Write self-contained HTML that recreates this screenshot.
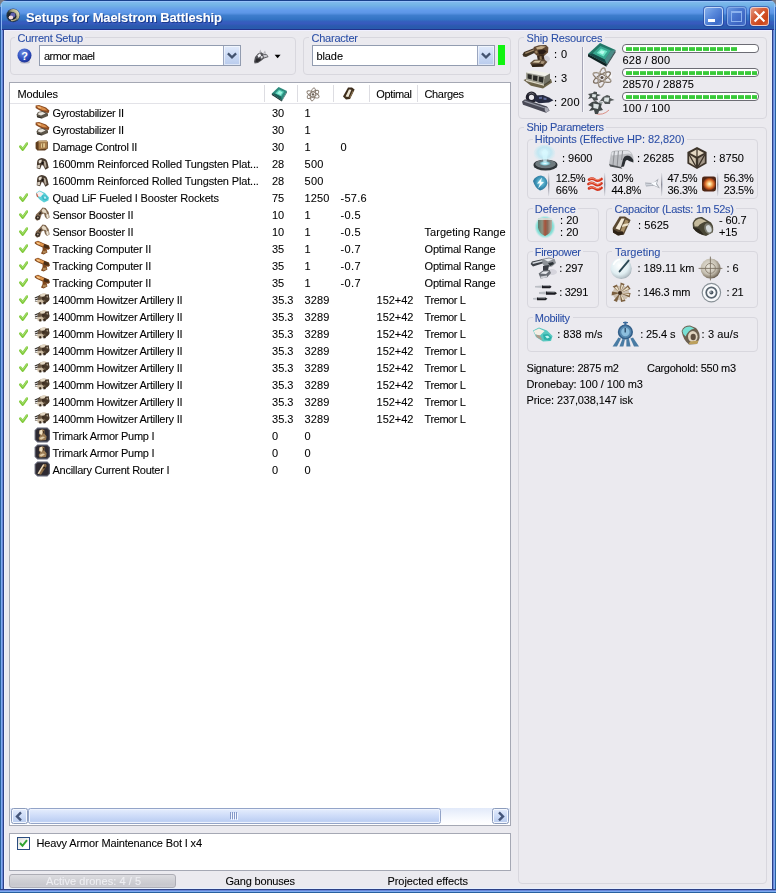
<!DOCTYPE html><html><head><meta charset="utf-8"><title>Setups for Maelstrom Battleship</title><style>

html,body{margin:0;padding:0}
body{width:776px;height:893px;overflow:hidden;position:relative;background:#EBEAEF;font:11px "Liberation Sans",sans-serif;color:#000}
div,span,svg{position:absolute;box-sizing:content-box}
.t{white-space:pre;line-height:13px;height:13px;-webkit-text-stroke:0.08px currentColor}
#tx{left:0;top:0;width:776px;height:893px;will-change:transform}
.ttl{line-height:16px;height:16px;text-shadow:1px 1px 0 #1A3A8C}
.grp{border:1px solid #D8D7DE;border-radius:4px}
.wb{background:#fff;border:1px solid #A5A8B4}
.lblbg{background:#EBEAEF}
.sep{width:1px;background:#E2E1E6}

</style></head><body>
<svg width="0" height="0" style="left:0;top:0"><defs><filter id="bl" x="-10%" y="-10%" width="120%" height="120%"><feGaussianBlur stdDeviation="0.35"/></filter></defs></svg>
<div style="left:0;top:0;width:776px;height:30px;border-radius:7px 7px 0 0;background:linear-gradient(to bottom,#19418C 0,#19418C 1px,#96C3FA 1px,#96C3FA 2px,#7DB9EB 2.5px,#73B4E6 5px,#69A5E8 8px,#629BEB 10.5px,#5C96E6 13px,#3E7DCD 15.5px,#3273C3 19.5px,#3560BE 21.5px,#375ABE 23.5px,#2B5AAE 26px,#285AAC 29px,#23328C 29px,#23328C 30px)"></div>
<div style="left:0;top:0;width:776px;height:30px;z-index:-1;background:#7A7A84"></div>
<div style="left:0;top:30px;width:4px;height:863px;background:linear-gradient(to right,#28609F 0,#28609F 1px,#7DAAF0 1px,#7DAAF0 2px,#6987D7 2px,#6987D7 3px,#2D4187 3px)"></div>
<div style="left:772px;top:30px;width:4px;height:863px;background:linear-gradient(to right,#2D4187 0,#2D4187 1px,#6987D7 1px,#6987D7 2px,#7DAAF0 2px,#7DAAF0 3px,#28609F 3px)"></div>
<div style="left:0;top:889px;width:776px;height:4px;background:linear-gradient(to bottom,#2D4187 0,#2D4187 1px,#6987D7 1px,#6987D7 2px,#7DAAF0 2px,#7DAAF0 3px,#28609F 3px)"></div>
<div style="left:4px;top:30px;width:768px;height:1px;background:#F0F0FF"></div>
<div style="left:4px;top:30px;width:1px;height:859px;background:#EEF1FF"></div>
<div style="left:771px;top:30px;width:1px;height:859px;background:#E6F0FF"></div>
<div style="left:4px;top:888px;width:768px;height:1px;background:#E6F0FF"></div>
<div style="left:0;top:7px;width:1px;height:23px;background:rgba(30,80,165,.7)"></div><div style="left:1px;top:4px;width:1px;height:26px;background:rgba(160,200,252,.8)"></div>
<div style="left:775px;top:7px;width:1px;height:23px;background:rgba(30,80,165,.7)"></div><div style="left:774px;top:4px;width:1px;height:26px;background:rgba(160,200,252,.8)"></div>
<svg style="left:6px;top:8px" width="15" height="15" viewBox="0 0 15 15" ><defs><linearGradient id="ai" x1="0" y1=".85" x2="1" y2=".15"><stop offset="0" stop-color="#1A2632"/><stop offset=".36" stop-color="#28343A"/><stop offset=".6" stop-color="#A8A47C"/><stop offset="1" stop-color="#F0ECCC"/></linearGradient></defs>
<g filter="url(#bl)"><circle cx="7.1" cy="7.4" r="6.8" fill="#22324A" opacity=".8"/><circle cx="7.2" cy="7.2" r="6.2" fill="url(#ai)"/>
<circle cx="6.2" cy="8.2" r="4.2" fill="#1C2430"/><circle cx="6.9" cy="6.9" r="2.5" fill="#6060AE"/><ellipse cx="4.9" cy="9.5" rx="2.3" ry="2" fill="#F8DEDE"/><path d="M5 12.4 Q8 13 10 11" stroke="#B4AC84" stroke-width="1.2" fill="none"/></g></svg><div style="left:704px;top:7px;width:17px;height:17px;border:1px solid #C4D8F6;border-radius:3px;box-shadow:0 0 0 1px rgba(30,60,150,.55);background:linear-gradient(135deg,#86B0EC,#5A8ADC 40%,#3E6CC8 78%,#5482D6)"></div><div style="left:708px;top:19px;width:7px;height:3px;background:#fff"></div><div style="left:727px;top:7px;width:17px;height:17px;border:1px solid #86AAE6;border-radius:3px;box-shadow:0 0 0 1px rgba(30,60,150,.45);background:linear-gradient(135deg,#6C9AE0,#4A78D0 40%,#3C64C2 78%,#4872CA)"></div><div style="left:731px;top:11px;width:9px;height:8px;border:1px solid #8CB2EE;border-top-width:2px"></div><div style="left:750px;top:7px;width:17px;height:17px;border:1px solid #F0CCC4;border-radius:3px;box-shadow:0 0 0 1px rgba(30,60,150,.55);background:linear-gradient(135deg,#E49A84,#D65E38 38%,#CC4418 75%,#D8643C)"></div><svg style="left:750px;top:7px" width="19" height="19" viewBox="0 0 19 19" ><path d="M4.6 4.6 L14.4 14.4 M14.4 4.6 L4.6 14.4" stroke="#fff" stroke-width="2.1" stroke-linecap="butt"/></svg>
<div class="grp" style="left:10px;top:37px;width:284px;height:36px"></div>
<div class="lblbg" style="left:15px;top:34px;width:70px;height:10px;"></div>
<div class="grp" style="left:303px;top:37px;width:206px;height:36px"></div>
<div class="lblbg" style="left:309px;top:34px;width:51px;height:10px;"></div>
<div style="left:39px;top:45px;width:200px;height:19px;background:#fff;border:1px solid #929CB0"></div>
<div style="left:223px;top:46px;width:16px;height:19px;border-left:1px solid #9AA6C0;background:linear-gradient(to bottom,#E2EBFB,#CBDAF5 50%,#B9CBEC);box-shadow:inset 0 0 0 1px rgba(255,255,255,.5)"></div><svg style="left:224px;top:46px" width="16" height="18" viewBox="0 0 16 18" ><path d="M3.9 7.4 L8 11.4 L12.1 7.4" stroke="#43536F" stroke-width="2.2" fill="none"/></svg>
<div style="left:312px;top:45px;width:181px;height:19px;background:#fff;border:1px solid #929CB0"></div>
<div style="left:477px;top:46px;width:16px;height:19px;border-left:1px solid #9AA6C0;background:linear-gradient(to bottom,#E2EBFB,#CBDAF5 50%,#B9CBEC);box-shadow:inset 0 0 0 1px rgba(255,255,255,.5)"></div><svg style="left:478px;top:46px" width="16" height="18" viewBox="0 0 16 18" ><path d="M3.9 7.4 L8 11.4 L12.1 7.4" stroke="#43536F" stroke-width="2.2" fill="none"/></svg>
<div style="left:498px;top:45px;width:7px;height:20px;background:#10F410"></div>
<svg style="left:17px;top:48px" width="16" height="16" viewBox="0 0 16 16" ><defs><radialGradient id="hg" cx="0.4" cy="0.3" r="0.75"><stop offset="0" stop-color="#6E8CE0"/><stop offset="0.6" stop-color="#3050C0"/><stop offset="1" stop-color="#1A2E90"/></radialGradient></defs>
<ellipse cx="8" cy="14" rx="5" ry="1.6" fill="#9A9AB0" opacity=".6"/>
<circle cx="7.5" cy="7.5" r="7" fill="url(#hg)"/>
<text x="7.6" y="11.6" font-family="Liberation Sans,sans-serif" font-weight="bold" font-size="11" fill="#fff" text-anchor="middle">?</text></svg>
<svg style="left:253px;top:48px" width="17" height="17" viewBox="0 0 17 17" ><g filter="url(#bl)"><path d="M1 13.6 L2 9 L5 5.6 L8 4 L10 5.6 L14 6.4 L15.6 9 L11 10.6 L8.6 12.6 L5 15 L1.6 15.4 Z" fill="#55555A"/>
<path d="M6 4.4 L7.4 1.4 L8.6 4.6 Z M10.4 5 L12 2.6 L13.2 6 Z" fill="#B4B4BA"/>
<path d="M4.4 7.4 L7 5.2 L8.2 7.6 L5.6 9.8 Z" fill="#F2F2F6"/><path d="M10 6.4 L14 7.2 L14.6 8.6 L11 9.6 Z" fill="#C8C8CE"/>
<path d="M3 10.6 L6.6 10.6 L8 12 L4.6 14 L2.4 14 Z" fill="#2A2A2E"/><path d="M7.6 8 L9.6 8 L9.6 10 L8 10.4 Z" fill="#DADADF"/></g></svg>
<svg style="left:274px;top:54px" width="8" height="6"><path d="M0.6 0.8h6l-3 3.5z" fill="#000"/></svg>
<div style="left:9px;top:82px;width:500px;height:742px;background:#fff;border:1px solid #A5A8B4"></div>
<div style="left:10px;top:103px;width:500px;height:1px;background:#E3E3E8"></div>
<div style="left:264px;top:85px;width:1px;height:17px;background:#DDDDE2"></div>
<div style="left:297px;top:85px;width:1px;height:17px;background:#DDDDE2"></div>
<div style="left:333px;top:85px;width:1px;height:17px;background:#DDDDE2"></div>
<div style="left:369px;top:85px;width:1px;height:17px;background:#DDDDE2"></div>
<div style="left:417px;top:85px;width:1px;height:17px;background:#DDDDE2"></div>
<svg style="left:271px;top:86px" width="17" height="16" viewBox="0 0 17 16" ><g filter="url(#bl)"><path d="M0.8 7.6 L7.6 1 L16 5 L11 14.4 Z" fill="#2E8C7E"/><path d="M4 7.4 L8 3.4 L13 5.8 L10 10.6 Z" fill="#58D0B8"/><path d="M6 7.2 L8.4 4.8 L11.4 6.2 L9.6 9 Z" fill="#A0F4E0"/>
<path d="M0.8 7.6 L11 14.4 L10.8 15.6 L0.8 9 Z" fill="#1A3030"/><path d="M11 14.4 L16 5 L16 6.4 L10.8 15.6 Z" fill="#3A5C60"/><path d="M0.8 7.6 L4 7.4 L10 10.6 L11 14.4 Z" fill="#1E5E58"/></g></svg><svg style="left:305px;top:86px" width="16" height="16" viewBox="0 0 16 16" ><g filter="url(#bl)"><g fill="none" stroke="#84786C" stroke-width=".9"><ellipse cx="8" cy="8.4" rx="6.6" ry="2.4" transform="rotate(24 8 8.4)"/><ellipse cx="8" cy="8.4" rx="6.6" ry="2.4" transform="rotate(-32 8 8.4)"/><ellipse cx="8" cy="8.4" rx="2.4" ry="6.6" transform="rotate(10 8 8.4)"/></g><circle cx="8" cy="8.4" r="1.2" fill="#6A5E52"/></g></svg><svg style="left:341px;top:86px" width="16" height="16" viewBox="0 0 16 16" ><g filter="url(#bl)"><path d="M2 10.6 L7 1.6 L11 1.4 L13.6 3.6 L9 13 L5 13.6 Z" fill="#3E2E1E"/><path d="M4.6 10.4 L8 3.6 L10.4 3.8 L7.4 11 Z" fill="#EEE6D4"/><path d="M8.4 11.4 L11.8 4.4 L12.8 5 L9 12.6 Z" fill="#8E7654"/></g></svg>
<svg style="left:34px;top:104px" width="17" height="16" viewBox="0 0 17 16" ><g filter="url(#bl)"><path d="M1.6 1.6 L5 1 L12 3.6 L15.4 6.6 L14.6 9 L10 8.4 L4 5.6 L1.6 4 Z" fill="#8A4A20"/><path d="M2.4 2 L5 1.8 L11 4.2 L13.6 6.4 L9 6.2 L4 4 Z" fill="#D88C48"/><path d="M4 2.6 L7 3.4 L6.6 4.4 L3.8 3.6 Z" fill="#F4C890"/>
<path d="M4 8 L9 7 L14 9.6 L14 12 L8 14.6 L3 13 L2.6 10.6 Z" fill="#5C5448"/><path d="M4.6 8.6 L8.6 8 L11.6 9.6 L7 11.6 L4 10.6 Z" fill="#E8E4DC"/><path d="M3 12 L7.6 13.4 L7.6 14.6 L3 13.2 Z" fill="#2E2A24"/></g></svg>
<svg style="left:34px;top:121px" width="17" height="16" viewBox="0 0 17 16" ><g filter="url(#bl)"><path d="M1.6 1.6 L5 1 L12 3.6 L15.4 6.6 L14.6 9 L10 8.4 L4 5.6 L1.6 4 Z" fill="#8A4A20"/><path d="M2.4 2 L5 1.8 L11 4.2 L13.6 6.4 L9 6.2 L4 4 Z" fill="#D88C48"/><path d="M4 2.6 L7 3.4 L6.6 4.4 L3.8 3.6 Z" fill="#F4C890"/>
<path d="M4 8 L9 7 L14 9.6 L14 12 L8 14.6 L3 13 L2.6 10.6 Z" fill="#5C5448"/><path d="M4.6 8.6 L8.6 8 L11.6 9.6 L7 11.6 L4 10.6 Z" fill="#E8E4DC"/><path d="M3 12 L7.6 13.4 L7.6 14.6 L3 13.2 Z" fill="#2E2A24"/></g></svg>
<svg style="left:19px;top:142px" width="10" height="10" viewBox="0 0 10 10" ><g filter="url(#bl)"><path d="M1.4 4.6 L3.8 7.6 L8 1.6" stroke="#80CA3A" stroke-width="2.6" fill="none" stroke-linecap="round" stroke-linejoin="round"/><path d="M1.6 4.2 L3.8 6.6 L7.8 1.4" stroke="#B4E486" stroke-width=".8" fill="none" stroke-linecap="round"/></g></svg>
<svg style="left:34px;top:138px" width="17" height="16" viewBox="0 0 17 16" ><g filter="url(#bl)"><path d="M1.6 4.4 L4.4 2.8 L12.6 2.6 L13.8 4 L13.8 10.6 L11 12.6 L3.4 12.6 L1.6 10.6 Z" fill="#5E3E1E"/><path d="M4.6 4.4 L13 4 L13 10.4 L4.6 11.4 Z" fill="#A87C48"/><path d="M7 5.4 L11 5.2 L11 9.4 L7 9.8 Z" fill="#E0C48C"/><path d="M8.6 5.4 V9.6" stroke="#7C5A30" stroke-width=".8"/><path d="M4.4 2.8 L12.6 2.6 L13.8 4 L4.6 4.4 Z" fill="#C8A878"/></g></svg>
<svg style="left:34px;top:155px" width="17" height="16" viewBox="0 0 17 16" ><g filter="url(#bl)"><g transform="translate(0.9,1.6) scale(0.92,0.9)"><path d="M2.4 6 Q3 2 7.4 1.6 Q12.6 2 13.6 6.4 L15 12.4 L11.4 14.6 L9 10 L7.4 9.4 L5.6 14 L2 13 Z" fill="#4A3C30"/><path d="M4 5 Q5.4 3 7.6 3.6 L7 6.6 L4.4 7.6 Z" fill="#E8E0D4"/><path d="M9.6 4.6 Q11.6 4.6 12 7 L12.6 11.6 L11 12.6 L9.8 8 Z" fill="#B4A898"/><path d="M2.6 9.6 L5.6 9 L5.4 13 L2.6 12.4 Z" fill="#D8CEC0"/><path d="M7.4 5.6 L9.6 6 L9 8.6 L7 8 Z" fill="#1E1814"/></g></g></svg>
<svg style="left:34px;top:172px" width="17" height="16" viewBox="0 0 17 16" ><g filter="url(#bl)"><g transform="translate(0.9,1.6) scale(0.92,0.9)"><path d="M2.4 6 Q3 2 7.4 1.6 Q12.6 2 13.6 6.4 L15 12.4 L11.4 14.6 L9 10 L7.4 9.4 L5.6 14 L2 13 Z" fill="#4A3C30"/><path d="M4 5 Q5.4 3 7.6 3.6 L7 6.6 L4.4 7.6 Z" fill="#E8E0D4"/><path d="M9.6 4.6 Q11.6 4.6 12 7 L12.6 11.6 L11 12.6 L9.8 8 Z" fill="#B4A898"/><path d="M2.6 9.6 L5.6 9 L5.4 13 L2.6 12.4 Z" fill="#D8CEC0"/><path d="M7.4 5.6 L9.6 6 L9 8.6 L7 8 Z" fill="#1E1814"/></g></g></svg>
<svg style="left:19px;top:193px" width="10" height="10" viewBox="0 0 10 10" ><g filter="url(#bl)"><path d="M1.4 4.6 L3.8 7.6 L8 1.6" stroke="#80CA3A" stroke-width="2.6" fill="none" stroke-linecap="round" stroke-linejoin="round"/><path d="M1.6 4.2 L3.8 6.6 L7.8 1.4" stroke="#B4E486" stroke-width=".8" fill="none" stroke-linecap="round"/></g></svg>
<svg style="left:34px;top:189px" width="17" height="16" viewBox="0 0 17 16" ><g filter="url(#bl)"><path d="M2 4 L5.6 1.6 L11 4 L15 8.6 L14.4 11.6 L10 13.4 L5.6 10.4 L2.6 7 Z" fill="#5CD0D8"/><path d="M2.4 4.2 L5.6 2.2 L9.6 4.4 L6.4 8 L3.4 7 Z" fill="#F6EEF0"/><path d="M2 4 L2.8 7.2 L4.6 8.8 L3.4 5 Z" fill="#D06048"/><path d="M8 6.6 L12 6.4 L14.2 9.4 L12 11.6 L8.6 10.6 Z" fill="#38B8C4"/><path d="M9.4 7.6 L11.6 7.6 L12.6 9.2 L10.6 10 Z" fill="#B8F0F8"/></g></svg>
<svg style="left:19px;top:210px" width="10" height="10" viewBox="0 0 10 10" ><g filter="url(#bl)"><path d="M1.4 4.6 L3.8 7.6 L8 1.6" stroke="#80CA3A" stroke-width="2.6" fill="none" stroke-linecap="round" stroke-linejoin="round"/><path d="M1.6 4.2 L3.8 6.6 L7.8 1.4" stroke="#B4E486" stroke-width=".8" fill="none" stroke-linecap="round"/></g></svg>
<svg style="left:34px;top:206px" width="17" height="16" viewBox="0 0 17 16" ><g filter="url(#bl)"><path d="M0.8 12.6 L2 8.6 L5.6 5 L8.6 1.6 L11.6 2 L14.6 6 L15.6 11.6 L13 13 L11 11 L10 7.6 L7.6 8.6 L6 13.6 L3 14.8 Z" fill="#806850"/><path d="M7.6 4 L9.6 2.6 L12 4.6 L13.4 8.6 L11.4 7 L8.6 6.6 Z" fill="#E4D8C4"/><path d="M12 8.6 L14.4 8 L14.8 11.4 L13 12.4 Z" fill="#F0E8D8"/><circle cx="3.8" cy="11.6" r="2.2" fill="#2A221C"/><circle cx="3.8" cy="11.6" r="1" fill="#B0A08C"/><path d="M4.6 7.6 L7 5.6 L7.6 7.6 L5.6 9 Z" fill="#3A2E24"/></g></svg>
<svg style="left:19px;top:227px" width="10" height="10" viewBox="0 0 10 10" ><g filter="url(#bl)"><path d="M1.4 4.6 L3.8 7.6 L8 1.6" stroke="#80CA3A" stroke-width="2.6" fill="none" stroke-linecap="round" stroke-linejoin="round"/><path d="M1.6 4.2 L3.8 6.6 L7.8 1.4" stroke="#B4E486" stroke-width=".8" fill="none" stroke-linecap="round"/></g></svg>
<svg style="left:34px;top:223px" width="17" height="16" viewBox="0 0 17 16" ><g filter="url(#bl)"><path d="M0.8 12.6 L2 8.6 L5.6 5 L8.6 1.6 L11.6 2 L14.6 6 L15.6 11.6 L13 13 L11 11 L10 7.6 L7.6 8.6 L6 13.6 L3 14.8 Z" fill="#806850"/><path d="M7.6 4 L9.6 2.6 L12 4.6 L13.4 8.6 L11.4 7 L8.6 6.6 Z" fill="#E4D8C4"/><path d="M12 8.6 L14.4 8 L14.8 11.4 L13 12.4 Z" fill="#F0E8D8"/><circle cx="3.8" cy="11.6" r="2.2" fill="#2A221C"/><circle cx="3.8" cy="11.6" r="1" fill="#B0A08C"/><path d="M4.6 7.6 L7 5.6 L7.6 7.6 L5.6 9 Z" fill="#3A2E24"/></g></svg>
<svg style="left:19px;top:244px" width="10" height="10" viewBox="0 0 10 10" ><g filter="url(#bl)"><path d="M1.4 4.6 L3.8 7.6 L8 1.6" stroke="#80CA3A" stroke-width="2.6" fill="none" stroke-linecap="round" stroke-linejoin="round"/><path d="M1.6 4.2 L3.8 6.6 L7.8 1.4" stroke="#B4E486" stroke-width=".8" fill="none" stroke-linecap="round"/></g></svg>
<svg style="left:34px;top:240px" width="17" height="16" viewBox="0 0 17 16" ><g filter="url(#bl)"><path d="M0.8 2 L4 0.8 L10 3.4 L15 5.4 L16 8.6 L14 10 L12.6 9 L13.4 12.6 L9.6 14.6 L7 13.6 L8.6 10 L8.6 7.6 L3 5 L0.8 3.6 Z" fill="#80481E"/><path d="M1.6 2.2 L4 1.6 L10 4.2 L9 6.4 L3.4 4.2 Z" fill="#E0964C"/><path d="M3 2.4 L6 3.4 L5.6 4.4 L2.8 3.4 Z" fill="#F8D098"/><path d="M10 4 L14.6 5.8 L15.2 8.4 L13 8.6 L10 7.4 Z" fill="#4A2E16"/><path d="M8.6 11 L12.4 10.4 L12.6 12.4 L9 13.6 Z" fill="#B08858"/></g></svg>
<svg style="left:19px;top:261px" width="10" height="10" viewBox="0 0 10 10" ><g filter="url(#bl)"><path d="M1.4 4.6 L3.8 7.6 L8 1.6" stroke="#80CA3A" stroke-width="2.6" fill="none" stroke-linecap="round" stroke-linejoin="round"/><path d="M1.6 4.2 L3.8 6.6 L7.8 1.4" stroke="#B4E486" stroke-width=".8" fill="none" stroke-linecap="round"/></g></svg>
<svg style="left:34px;top:257px" width="17" height="16" viewBox="0 0 17 16" ><g filter="url(#bl)"><path d="M0.8 2 L4 0.8 L10 3.4 L15 5.4 L16 8.6 L14 10 L12.6 9 L13.4 12.6 L9.6 14.6 L7 13.6 L8.6 10 L8.6 7.6 L3 5 L0.8 3.6 Z" fill="#80481E"/><path d="M1.6 2.2 L4 1.6 L10 4.2 L9 6.4 L3.4 4.2 Z" fill="#E0964C"/><path d="M3 2.4 L6 3.4 L5.6 4.4 L2.8 3.4 Z" fill="#F8D098"/><path d="M10 4 L14.6 5.8 L15.2 8.4 L13 8.6 L10 7.4 Z" fill="#4A2E16"/><path d="M8.6 11 L12.4 10.4 L12.6 12.4 L9 13.6 Z" fill="#B08858"/></g></svg>
<svg style="left:19px;top:278px" width="10" height="10" viewBox="0 0 10 10" ><g filter="url(#bl)"><path d="M1.4 4.6 L3.8 7.6 L8 1.6" stroke="#80CA3A" stroke-width="2.6" fill="none" stroke-linecap="round" stroke-linejoin="round"/><path d="M1.6 4.2 L3.8 6.6 L7.8 1.4" stroke="#B4E486" stroke-width=".8" fill="none" stroke-linecap="round"/></g></svg>
<svg style="left:34px;top:274px" width="17" height="16" viewBox="0 0 17 16" ><g filter="url(#bl)"><path d="M0.8 2 L4 0.8 L10 3.4 L15 5.4 L16 8.6 L14 10 L12.6 9 L13.4 12.6 L9.6 14.6 L7 13.6 L8.6 10 L8.6 7.6 L3 5 L0.8 3.6 Z" fill="#80481E"/><path d="M1.6 2.2 L4 1.6 L10 4.2 L9 6.4 L3.4 4.2 Z" fill="#E0964C"/><path d="M3 2.4 L6 3.4 L5.6 4.4 L2.8 3.4 Z" fill="#F8D098"/><path d="M10 4 L14.6 5.8 L15.2 8.4 L13 8.6 L10 7.4 Z" fill="#4A2E16"/><path d="M8.6 11 L12.4 10.4 L12.6 12.4 L9 13.6 Z" fill="#B08858"/></g></svg>
<svg style="left:19px;top:295px" width="10" height="10" viewBox="0 0 10 10" ><g filter="url(#bl)"><path d="M1.4 4.6 L3.8 7.6 L8 1.6" stroke="#80CA3A" stroke-width="2.6" fill="none" stroke-linecap="round" stroke-linejoin="round"/><path d="M1.6 4.2 L3.8 6.6 L7.8 1.4" stroke="#B4E486" stroke-width=".8" fill="none" stroke-linecap="round"/></g></svg>
<svg style="left:34px;top:291px" width="17" height="16" viewBox="0 0 17 16" ><g filter="url(#bl)"><path d="M0.6 6.4 L6 4.2 L6.4 5.4 L1 7.6 Z M0.8 8.6 L6 6.6 L6.4 7.8 L1.2 9.6 Z" fill="#34302C"/><path d="M0.8 10.2 L5 9.4 L5 10.4 L1 11 Z" fill="#8C8478"/>
<ellipse cx="9.6" cy="7.6" rx="5.8" ry="4.8" fill="#6A5844"/><path d="M6 3.6 L10.6 2 L13.4 3.6 L9.4 5.8 L6.4 5.4 Z" fill="#E4D8C4"/><path d="M3.4 9.2 L8 8.6 L10 11 L6.4 13.4 L3.6 12.4 Z" fill="#CCBCA4"/>
<path d="M11 3.8 L14.8 3.2 L15.4 9 L12.4 11.4 L10.6 8 Z" fill="#46382A"/><path d="M8 6 L10.6 5.6 L11 8.6 L8.4 9 Z" fill="#3E2E20"/>
<path d="M5 11.6 L7 11 L7.6 13.2 L5.4 13.6 Z M9.2 11 L11.8 10.4 L11.8 13 L9.6 13.6 Z" fill="#36291E"/><path d="M12.4 5 L14 4.8 L14.2 6.4 L12.8 6.6 Z" fill="#A89880"/></g></svg>
<svg style="left:19px;top:312px" width="10" height="10" viewBox="0 0 10 10" ><g filter="url(#bl)"><path d="M1.4 4.6 L3.8 7.6 L8 1.6" stroke="#80CA3A" stroke-width="2.6" fill="none" stroke-linecap="round" stroke-linejoin="round"/><path d="M1.6 4.2 L3.8 6.6 L7.8 1.4" stroke="#B4E486" stroke-width=".8" fill="none" stroke-linecap="round"/></g></svg>
<svg style="left:34px;top:308px" width="17" height="16" viewBox="0 0 17 16" ><g filter="url(#bl)"><path d="M0.6 6.4 L6 4.2 L6.4 5.4 L1 7.6 Z M0.8 8.6 L6 6.6 L6.4 7.8 L1.2 9.6 Z" fill="#34302C"/><path d="M0.8 10.2 L5 9.4 L5 10.4 L1 11 Z" fill="#8C8478"/>
<ellipse cx="9.6" cy="7.6" rx="5.8" ry="4.8" fill="#6A5844"/><path d="M6 3.6 L10.6 2 L13.4 3.6 L9.4 5.8 L6.4 5.4 Z" fill="#E4D8C4"/><path d="M3.4 9.2 L8 8.6 L10 11 L6.4 13.4 L3.6 12.4 Z" fill="#CCBCA4"/>
<path d="M11 3.8 L14.8 3.2 L15.4 9 L12.4 11.4 L10.6 8 Z" fill="#46382A"/><path d="M8 6 L10.6 5.6 L11 8.6 L8.4 9 Z" fill="#3E2E20"/>
<path d="M5 11.6 L7 11 L7.6 13.2 L5.4 13.6 Z M9.2 11 L11.8 10.4 L11.8 13 L9.6 13.6 Z" fill="#36291E"/><path d="M12.4 5 L14 4.8 L14.2 6.4 L12.8 6.6 Z" fill="#A89880"/></g></svg>
<svg style="left:19px;top:329px" width="10" height="10" viewBox="0 0 10 10" ><g filter="url(#bl)"><path d="M1.4 4.6 L3.8 7.6 L8 1.6" stroke="#80CA3A" stroke-width="2.6" fill="none" stroke-linecap="round" stroke-linejoin="round"/><path d="M1.6 4.2 L3.8 6.6 L7.8 1.4" stroke="#B4E486" stroke-width=".8" fill="none" stroke-linecap="round"/></g></svg>
<svg style="left:34px;top:325px" width="17" height="16" viewBox="0 0 17 16" ><g filter="url(#bl)"><path d="M0.6 6.4 L6 4.2 L6.4 5.4 L1 7.6 Z M0.8 8.6 L6 6.6 L6.4 7.8 L1.2 9.6 Z" fill="#34302C"/><path d="M0.8 10.2 L5 9.4 L5 10.4 L1 11 Z" fill="#8C8478"/>
<ellipse cx="9.6" cy="7.6" rx="5.8" ry="4.8" fill="#6A5844"/><path d="M6 3.6 L10.6 2 L13.4 3.6 L9.4 5.8 L6.4 5.4 Z" fill="#E4D8C4"/><path d="M3.4 9.2 L8 8.6 L10 11 L6.4 13.4 L3.6 12.4 Z" fill="#CCBCA4"/>
<path d="M11 3.8 L14.8 3.2 L15.4 9 L12.4 11.4 L10.6 8 Z" fill="#46382A"/><path d="M8 6 L10.6 5.6 L11 8.6 L8.4 9 Z" fill="#3E2E20"/>
<path d="M5 11.6 L7 11 L7.6 13.2 L5.4 13.6 Z M9.2 11 L11.8 10.4 L11.8 13 L9.6 13.6 Z" fill="#36291E"/><path d="M12.4 5 L14 4.8 L14.2 6.4 L12.8 6.6 Z" fill="#A89880"/></g></svg>
<svg style="left:19px;top:346px" width="10" height="10" viewBox="0 0 10 10" ><g filter="url(#bl)"><path d="M1.4 4.6 L3.8 7.6 L8 1.6" stroke="#80CA3A" stroke-width="2.6" fill="none" stroke-linecap="round" stroke-linejoin="round"/><path d="M1.6 4.2 L3.8 6.6 L7.8 1.4" stroke="#B4E486" stroke-width=".8" fill="none" stroke-linecap="round"/></g></svg>
<svg style="left:34px;top:342px" width="17" height="16" viewBox="0 0 17 16" ><g filter="url(#bl)"><path d="M0.6 6.4 L6 4.2 L6.4 5.4 L1 7.6 Z M0.8 8.6 L6 6.6 L6.4 7.8 L1.2 9.6 Z" fill="#34302C"/><path d="M0.8 10.2 L5 9.4 L5 10.4 L1 11 Z" fill="#8C8478"/>
<ellipse cx="9.6" cy="7.6" rx="5.8" ry="4.8" fill="#6A5844"/><path d="M6 3.6 L10.6 2 L13.4 3.6 L9.4 5.8 L6.4 5.4 Z" fill="#E4D8C4"/><path d="M3.4 9.2 L8 8.6 L10 11 L6.4 13.4 L3.6 12.4 Z" fill="#CCBCA4"/>
<path d="M11 3.8 L14.8 3.2 L15.4 9 L12.4 11.4 L10.6 8 Z" fill="#46382A"/><path d="M8 6 L10.6 5.6 L11 8.6 L8.4 9 Z" fill="#3E2E20"/>
<path d="M5 11.6 L7 11 L7.6 13.2 L5.4 13.6 Z M9.2 11 L11.8 10.4 L11.8 13 L9.6 13.6 Z" fill="#36291E"/><path d="M12.4 5 L14 4.8 L14.2 6.4 L12.8 6.6 Z" fill="#A89880"/></g></svg>
<svg style="left:19px;top:363px" width="10" height="10" viewBox="0 0 10 10" ><g filter="url(#bl)"><path d="M1.4 4.6 L3.8 7.6 L8 1.6" stroke="#80CA3A" stroke-width="2.6" fill="none" stroke-linecap="round" stroke-linejoin="round"/><path d="M1.6 4.2 L3.8 6.6 L7.8 1.4" stroke="#B4E486" stroke-width=".8" fill="none" stroke-linecap="round"/></g></svg>
<svg style="left:34px;top:359px" width="17" height="16" viewBox="0 0 17 16" ><g filter="url(#bl)"><path d="M0.6 6.4 L6 4.2 L6.4 5.4 L1 7.6 Z M0.8 8.6 L6 6.6 L6.4 7.8 L1.2 9.6 Z" fill="#34302C"/><path d="M0.8 10.2 L5 9.4 L5 10.4 L1 11 Z" fill="#8C8478"/>
<ellipse cx="9.6" cy="7.6" rx="5.8" ry="4.8" fill="#6A5844"/><path d="M6 3.6 L10.6 2 L13.4 3.6 L9.4 5.8 L6.4 5.4 Z" fill="#E4D8C4"/><path d="M3.4 9.2 L8 8.6 L10 11 L6.4 13.4 L3.6 12.4 Z" fill="#CCBCA4"/>
<path d="M11 3.8 L14.8 3.2 L15.4 9 L12.4 11.4 L10.6 8 Z" fill="#46382A"/><path d="M8 6 L10.6 5.6 L11 8.6 L8.4 9 Z" fill="#3E2E20"/>
<path d="M5 11.6 L7 11 L7.6 13.2 L5.4 13.6 Z M9.2 11 L11.8 10.4 L11.8 13 L9.6 13.6 Z" fill="#36291E"/><path d="M12.4 5 L14 4.8 L14.2 6.4 L12.8 6.6 Z" fill="#A89880"/></g></svg>
<svg style="left:19px;top:380px" width="10" height="10" viewBox="0 0 10 10" ><g filter="url(#bl)"><path d="M1.4 4.6 L3.8 7.6 L8 1.6" stroke="#80CA3A" stroke-width="2.6" fill="none" stroke-linecap="round" stroke-linejoin="round"/><path d="M1.6 4.2 L3.8 6.6 L7.8 1.4" stroke="#B4E486" stroke-width=".8" fill="none" stroke-linecap="round"/></g></svg>
<svg style="left:34px;top:376px" width="17" height="16" viewBox="0 0 17 16" ><g filter="url(#bl)"><path d="M0.6 6.4 L6 4.2 L6.4 5.4 L1 7.6 Z M0.8 8.6 L6 6.6 L6.4 7.8 L1.2 9.6 Z" fill="#34302C"/><path d="M0.8 10.2 L5 9.4 L5 10.4 L1 11 Z" fill="#8C8478"/>
<ellipse cx="9.6" cy="7.6" rx="5.8" ry="4.8" fill="#6A5844"/><path d="M6 3.6 L10.6 2 L13.4 3.6 L9.4 5.8 L6.4 5.4 Z" fill="#E4D8C4"/><path d="M3.4 9.2 L8 8.6 L10 11 L6.4 13.4 L3.6 12.4 Z" fill="#CCBCA4"/>
<path d="M11 3.8 L14.8 3.2 L15.4 9 L12.4 11.4 L10.6 8 Z" fill="#46382A"/><path d="M8 6 L10.6 5.6 L11 8.6 L8.4 9 Z" fill="#3E2E20"/>
<path d="M5 11.6 L7 11 L7.6 13.2 L5.4 13.6 Z M9.2 11 L11.8 10.4 L11.8 13 L9.6 13.6 Z" fill="#36291E"/><path d="M12.4 5 L14 4.8 L14.2 6.4 L12.8 6.6 Z" fill="#A89880"/></g></svg>
<svg style="left:19px;top:397px" width="10" height="10" viewBox="0 0 10 10" ><g filter="url(#bl)"><path d="M1.4 4.6 L3.8 7.6 L8 1.6" stroke="#80CA3A" stroke-width="2.6" fill="none" stroke-linecap="round" stroke-linejoin="round"/><path d="M1.6 4.2 L3.8 6.6 L7.8 1.4" stroke="#B4E486" stroke-width=".8" fill="none" stroke-linecap="round"/></g></svg>
<svg style="left:34px;top:393px" width="17" height="16" viewBox="0 0 17 16" ><g filter="url(#bl)"><path d="M0.6 6.4 L6 4.2 L6.4 5.4 L1 7.6 Z M0.8 8.6 L6 6.6 L6.4 7.8 L1.2 9.6 Z" fill="#34302C"/><path d="M0.8 10.2 L5 9.4 L5 10.4 L1 11 Z" fill="#8C8478"/>
<ellipse cx="9.6" cy="7.6" rx="5.8" ry="4.8" fill="#6A5844"/><path d="M6 3.6 L10.6 2 L13.4 3.6 L9.4 5.8 L6.4 5.4 Z" fill="#E4D8C4"/><path d="M3.4 9.2 L8 8.6 L10 11 L6.4 13.4 L3.6 12.4 Z" fill="#CCBCA4"/>
<path d="M11 3.8 L14.8 3.2 L15.4 9 L12.4 11.4 L10.6 8 Z" fill="#46382A"/><path d="M8 6 L10.6 5.6 L11 8.6 L8.4 9 Z" fill="#3E2E20"/>
<path d="M5 11.6 L7 11 L7.6 13.2 L5.4 13.6 Z M9.2 11 L11.8 10.4 L11.8 13 L9.6 13.6 Z" fill="#36291E"/><path d="M12.4 5 L14 4.8 L14.2 6.4 L12.8 6.6 Z" fill="#A89880"/></g></svg>
<svg style="left:19px;top:414px" width="10" height="10" viewBox="0 0 10 10" ><g filter="url(#bl)"><path d="M1.4 4.6 L3.8 7.6 L8 1.6" stroke="#80CA3A" stroke-width="2.6" fill="none" stroke-linecap="round" stroke-linejoin="round"/><path d="M1.6 4.2 L3.8 6.6 L7.8 1.4" stroke="#B4E486" stroke-width=".8" fill="none" stroke-linecap="round"/></g></svg>
<svg style="left:34px;top:410px" width="17" height="16" viewBox="0 0 17 16" ><g filter="url(#bl)"><path d="M0.6 6.4 L6 4.2 L6.4 5.4 L1 7.6 Z M0.8 8.6 L6 6.6 L6.4 7.8 L1.2 9.6 Z" fill="#34302C"/><path d="M0.8 10.2 L5 9.4 L5 10.4 L1 11 Z" fill="#8C8478"/>
<ellipse cx="9.6" cy="7.6" rx="5.8" ry="4.8" fill="#6A5844"/><path d="M6 3.6 L10.6 2 L13.4 3.6 L9.4 5.8 L6.4 5.4 Z" fill="#E4D8C4"/><path d="M3.4 9.2 L8 8.6 L10 11 L6.4 13.4 L3.6 12.4 Z" fill="#CCBCA4"/>
<path d="M11 3.8 L14.8 3.2 L15.4 9 L12.4 11.4 L10.6 8 Z" fill="#46382A"/><path d="M8 6 L10.6 5.6 L11 8.6 L8.4 9 Z" fill="#3E2E20"/>
<path d="M5 11.6 L7 11 L7.6 13.2 L5.4 13.6 Z M9.2 11 L11.8 10.4 L11.8 13 L9.6 13.6 Z" fill="#36291E"/><path d="M12.4 5 L14 4.8 L14.2 6.4 L12.8 6.6 Z" fill="#A89880"/></g></svg>
<svg style="left:34px;top:427px" width="17" height="16" viewBox="0 0 17 16" ><g filter="url(#bl)"><path d="M3.4 0.6 L13.4 0.6 L16 3.2 L16 12.8 L13.4 15.4 L3.4 15.4 L0.6 12.8 L0.6 3.2 Z" fill="#5E6070"/><path d="M3.8 1.8 L13 1.8 L14.8 3.6 L14.8 12.4 L13 14.2 L3.8 14.2 L1.8 12.4 L1.8 3.6 Z" fill="#2E2C30"/><path d="M5.6 3.2 L8.6 2.2 L10.6 3.6 L10.4 6.6 L12.6 9.6 L12 13 L5.6 13.4 L4.6 11 L6.4 8.6 L4.8 6.6 Z" fill="#9C7C54"/><path d="M5.6 3.6 L8 2.8 L8.6 5.6 L7.6 8 L5.4 6.6 Z" fill="#F2E2C4"/><path d="M5.4 11 L9 9.4 L11 10.4 L7 12.8 Z" fill="#E0CCA8"/><path d="M9 4 L10.4 4 L10.2 6.4 L9 6.6 Z" fill="#4A3622"/></g></svg>
<svg style="left:34px;top:444px" width="17" height="16" viewBox="0 0 17 16" ><g filter="url(#bl)"><path d="M3.4 0.6 L13.4 0.6 L16 3.2 L16 12.8 L13.4 15.4 L3.4 15.4 L0.6 12.8 L0.6 3.2 Z" fill="#5E6070"/><path d="M3.8 1.8 L13 1.8 L14.8 3.6 L14.8 12.4 L13 14.2 L3.8 14.2 L1.8 12.4 L1.8 3.6 Z" fill="#2E2C30"/><path d="M5.6 3.2 L8.6 2.2 L10.6 3.6 L10.4 6.6 L12.6 9.6 L12 13 L5.6 13.4 L4.6 11 L6.4 8.6 L4.8 6.6 Z" fill="#9C7C54"/><path d="M5.6 3.6 L8 2.8 L8.6 5.6 L7.6 8 L5.4 6.6 Z" fill="#F2E2C4"/><path d="M5.4 11 L9 9.4 L11 10.4 L7 12.8 Z" fill="#E0CCA8"/><path d="M9 4 L10.4 4 L10.2 6.4 L9 6.6 Z" fill="#4A3622"/></g></svg>
<svg style="left:34px;top:461px" width="17" height="16" viewBox="0 0 17 16" ><g filter="url(#bl)"><path d="M3.4 0.6 L13.4 0.6 L16 3.2 L16 12.8 L13.4 15.4 L3.4 15.4 L0.6 12.8 L0.6 3.2 Z" fill="#5E6070"/><path d="M3.8 1.8 L13 1.8 L14.8 3.6 L14.8 12.4 L13 14.2 L3.8 14.2 L1.8 12.4 L1.8 3.6 Z" fill="#2E2C30"/><path d="M3.6 12.6 L9 3.4 L12 3 L12.6 5 L7 13.8 Z" fill="#8A6A44"/><path d="M3.6 12.6 L9 3.4 L10.4 3.6 L5 13 Z" fill="#F0E0C4"/><path d="M9 6.6 L11 5.6 L11.4 6.8 L9.6 8 Z" fill="#2E2218"/></g></svg>
<div style="left:10px;top:808px;width:500px;height:17px;background:linear-gradient(to bottom,#E2EAF9,#EEF3FC 35%,#FBFCFF 75%,#FFFFFF)"></div><div style="left:11px;top:808px;width:13px;height:12px;border:1px solid #8C9CBC;border-radius:2.5px;box-shadow:inset 0 0 0 1px #F4F8FF;padding:1px;background:linear-gradient(to bottom,#E4ECFC,#CBDAF6 55%,#B8CBEE)"></div><svg style="left:11px;top:808px" width="17" height="17" viewBox="0 0 17 17" ><path d="M10 4.4 L6 8.4 L10 12.4" stroke="#44557A" stroke-width="2.4" fill="none"/></svg><div style="left:492px;top:808px;width:13px;height:12px;border:1px solid #8C9CBC;border-radius:2.5px;box-shadow:inset 0 0 0 1px #F4F8FF;padding:1px;background:linear-gradient(to bottom,#E4ECFC,#CBDAF6 55%,#B8CBEE)"></div><svg style="left:492px;top:808px" width="17" height="17" viewBox="0 0 17 17" ><path d="M7 4.4 L11 8.4 L7 12.4" stroke="#44557A" stroke-width="2.4" fill="none"/></svg><div style="left:28px;top:808px;width:409px;height:12px;border:1px solid #93A4C8;border-radius:2.5px;box-shadow:inset 0 0 0 1px #EEF3FE;padding:1px;background:linear-gradient(to bottom,#E6EEFD,#D0DDF9 45%,#BED0F3 85%,#C8D7F5)"></div><div style="left:230px;top:812px;width:1px;height:7px;background:#8498C8"></div><div style="left:231px;top:813px;width:1px;height:7px;background:#F2F6FF"></div><div style="left:232px;top:812px;width:1px;height:7px;background:#8498C8"></div><div style="left:233px;top:813px;width:1px;height:7px;background:#F2F6FF"></div><div style="left:234px;top:812px;width:1px;height:7px;background:#8498C8"></div><div style="left:235px;top:813px;width:1px;height:7px;background:#F2F6FF"></div><div style="left:236px;top:812px;width:1px;height:7px;background:#8498C8"></div><div style="left:237px;top:813px;width:1px;height:7px;background:#F2F6FF"></div>
<div style="left:9px;top:833px;width:500px;height:36px;background:#fff;border:1px solid #A5A8B4"></div>
<div style="left:17px;top:837px;width:11px;height:11px;border:1px solid #2A4C80;background:linear-gradient(135deg,#DCDCD8,#fff 70%)"></div><svg style="left:17px;top:837px" width="13" height="13" viewBox="0 0 13 13" ><path d="M3 6 L5.5 8.8 L10 3.2" stroke="#2FA32F" stroke-width="2" fill="none"/></svg>
<div style="left:9px;top:874px;width:165px;height:12px;border:1px solid #ADADB5;border-radius:3px;background:linear-gradient(to bottom,#DCDCE0,#D0D0D5 45%,#C8C8CE 80%,#CECED3)"></div>
<div class="grp" style="left:518px;top:37px;width:247px;height:80px"></div>
<div class="lblbg" style="left:524px;top:34px;width:81px;height:10px;"></div>
<div style="left:582px;top:47px;width:1px;height:65px;background:#A6A6B6"></div>
<div style="left:583px;top:47px;width:1px;height:65px;background:#F6F6FA"></div>
<svg style="left:522px;top:44px" width="28" height="24" viewBox="0 0 28 24" ><g filter="url(#bl)">
<ellipse cx="22.5" cy="15" rx="5.5" ry="3.5" fill="#C0C0C8" opacity=".55"/>
<path d="M0.6 10.6 L2 8 L13 3.8 L15.5 7.5 L4 13 L1.4 12.4 Z" fill="#3E3024"/>
<path d="M3 8.8 L12.6 5 L13.4 6 L3.6 10 Z" fill="#A48C6C"/>
<path d="M11.6 3 L17 1.2 L24 1 L26.4 3.4 L26 8.6 L22 12 L16.6 13 L12.4 9.4 Z" fill="#5E4630"/>
<path d="M14 3.4 L19 2 L24 2.4 L20 5 L15 5.4 Z" fill="#C4AC88"/>
<path d="M16 6.6 L22 5.4 L24.6 7.6 L21 10.6 L17 10.6 Z" fill="#2A1E14"/>
<path d="M13 7 L15 6.4 L15.6 9 L13.6 9.4 Z" fill="#9C8464"/>
<path d="M15 12 L21.6 10.6 L22.6 16.6 L16 17.6 Z" fill="#36281C"/>
<path d="M17.4 12.4 L19.4 12 L20 16 L18 16.4 Z" fill="#8C7454"/>
<path d="M8 19 L12 15.8 L22 15.2 L25.4 18 L21.4 22.6 L10.4 23 Z" fill="#5E4C38"/>
<path d="M10.4 18.6 L13 16.8 L19 16.4 L17 18.8 Z" fill="#D8C8A8"/>
<path d="M19.4 17 L23 17.6 L21 20 L18.6 19.4 Z" fill="#A89478"/>
<path d="M9.6 20.6 L20.6 20 L21.4 22.6 L10.4 23 Z" fill="#2E2218"/></g></svg><svg style="left:523px;top:69px" width="30" height="20" viewBox="0 0 30 20" ><g filter="url(#bl)">
<path d="M0.5 11 L8 16.8 L20 19.4 L29 13.4 L28 10 L6 9 Z" fill="#5E5438" opacity=".9"/>
<path d="M3 3.5 L9.5 1.3 L27 4.5 L22 7.2 Z" fill="#F0F0E8"/>
<path d="M3 3.5 L22 7.2 L21 15.4 L3 10.6 Z" fill="#A4A498"/>
<path d="M4.6 5 L8.8 5.8 L8.6 10.6 L4.6 9.6 Z M10.2 6.2 L14.6 7 L14.2 12.2 L10 11.2 Z M16 7.4 L20.6 8.2 L20 13.8 L15.6 12.6 Z" fill="#2A2A26"/>
<path d="M22 7.2 L27 4.5 L27 11.6 L21 15.4 Z" fill="#74746A"/>
<path d="M3 10.6 L21 15.4 L21 16.8 L3 12 Z" fill="#DCD8C8"/><path d="M21 15.4 L27 11.6 L27 13 L21 16.8 Z" fill="#4A463A"/></g></svg><svg style="left:521px;top:90px" width="33" height="24" viewBox="0 0 33 24" ><g filter="url(#bl)">
<circle cx="10.5" cy="7.3" r="4.2" fill="none" stroke="#24242E" stroke-width="3.2"/>
<path d="M7.6 4.2 A4.2 4.2 0 0 1 13.4 4.4" stroke="#70707C" stroke-width=".9" fill="none"/>
<path d="M13.5 5.6 L22 5 L28 7.6 L32.5 10.2 L28 12.6 L18 13.2 L13.5 10.8 Z" fill="#282C40"/>
<path d="M18 7 L21 6.8 L21 8.8 L18 9 Z M22.5 7.6 L25.5 8 L25.5 10 L22.5 9.8 Z" fill="#5C6898"/>
<path d="M1 11.6 L4 9.2 L26 16.6 L28.6 20.6 L25 22.8 L2 14.8 Z" fill="#484A56"/>
<path d="M3.6 10.6 L25 17.8 L24.6 18.8 L3.2 11.8 Z" fill="#9698A4"/>
<path d="M24.4 17 L27.6 18.4 L27.8 21 L25 22.4 L23.6 20 Z" fill="#ACACB6"/></g></svg><svg style="left:587px;top:42px" width="30" height="25" viewBox="0 0 30 25" ><g filter="url(#bl)">
<path d="M1 12 L13 1 L28.5 8 L20 22 Z" fill="#247868"/>
<path d="M5.6 11.4 L13.4 4 L24 8.6 L17.8 17.4 Z" fill="#38A890"/>
<path d="M9.6 11 L14 6.6 L20.4 9.2 L16.6 14.4 Z" fill="#6CE4C4"/>
<path d="M12 10.6 L14.4 8.2 L17.8 9.6 L15.8 12.4 Z" fill="#B4FCEC"/>
<path d="M1 12 L5.6 11.4 L17.8 17.4 L20 22 Z" fill="#184C48"/>
<path d="M20 22 L17.8 17.4 L24 8.6 L28.5 8 Z" fill="#4C8C88"/>
<path d="M1 12 L20 22 L19.4 24.8 L1 14.4 Z" fill="#102424"/>
<path d="M20 22 L28.5 8 L28.5 10.6 L19.4 24.8 Z" fill="#3C5054"/></g></svg><svg style="left:591px;top:66px" width="24" height="24" viewBox="0 0 24 24" ><g filter="url(#bl)"><ellipse cx="16" cy="10" rx="5" ry="4" fill="#fff" opacity=".6"/>
<g fill="none" stroke="#7A6C5E" stroke-width="1.3"><ellipse cx="11" cy="11.5" rx="9.6" ry="3.2" transform="rotate(24 11 11.5)"/><ellipse cx="11" cy="11.5" rx="9.6" ry="3.2" transform="rotate(-30 11 11.5)"/><ellipse cx="11" cy="11.5" rx="3.4" ry="9.8" transform="rotate(10 11 11.5)"/></g>
<g fill="none" stroke="#D8D0C4" stroke-width=".5"><ellipse cx="11" cy="11" rx="9.6" ry="3.2" transform="rotate(24 11 11)"/><ellipse cx="11" cy="11" rx="3.4" ry="9.8" transform="rotate(10 11 11)"/></g>
<circle cx="11" cy="11.5" r="1.6" fill="#5A4E44"/></g></svg><svg style="left:586px;top:90px" width="30" height="26" viewBox="0 0 30 26" ><g filter="url(#bl)">
<path d="M9 23.5 Q17 26 23 20" stroke="#D88478" stroke-width=".9" fill="none"/>
<path d="M2 4 L7 3 L8 1.5 L11 2 L11 4 L15 5 L11 6.6 L12 10 L8 11 L6 8 L2 9 L4 6 Z" fill="#4A5050"/>
<path d="M17 7 L21 5 L24 6 L24 8 L28.5 10 L24.5 11 L24 14 L19 14 L17 11 L14 11 Z" fill="#525858"/>
<path d="M6 12 L10 11 L13 13 L16 13 L15 17 L17 20 L13 21 L12 24 L9 24 L8 20 L3 21 L6 17 L2 15 Z" fill="#424848"/>
<path d="M6.4 4 L10.4 4.4 L9.4 7.6 L6 7 Z M18.4 7.6 L23.4 7.6 L22.4 12 L18 11.2 Z M7.4 13.6 L13 14.4 L12 19 L7.4 18 Z" fill="#DCE4E4"/>
<path d="M13 11 L17 12 L16 14 L13 13 Z" fill="#A0A8A8"/></g></svg>
<div style="left:622px;top:44px;width:135px;height:7px;border:1px solid #6C6C74;border-radius:4px;background:#fff"></div><div style="left:626px;top:46.5px;width:5.6px;height:4px;background:linear-gradient(to bottom,#5FD65F,#2FC62F 50%,#4CD04C)"></div><div style="left:633px;top:46.5px;width:5.6px;height:4px;background:linear-gradient(to bottom,#5FD65F,#2FC62F 50%,#4CD04C)"></div><div style="left:640px;top:46.5px;width:5.6px;height:4px;background:linear-gradient(to bottom,#5FD65F,#2FC62F 50%,#4CD04C)"></div><div style="left:647px;top:46.5px;width:5.6px;height:4px;background:linear-gradient(to bottom,#5FD65F,#2FC62F 50%,#4CD04C)"></div><div style="left:654px;top:46.5px;width:5.6px;height:4px;background:linear-gradient(to bottom,#5FD65F,#2FC62F 50%,#4CD04C)"></div><div style="left:661px;top:46.5px;width:5.6px;height:4px;background:linear-gradient(to bottom,#5FD65F,#2FC62F 50%,#4CD04C)"></div><div style="left:668px;top:46.5px;width:5.6px;height:4px;background:linear-gradient(to bottom,#5FD65F,#2FC62F 50%,#4CD04C)"></div><div style="left:675px;top:46.5px;width:5.6px;height:4px;background:linear-gradient(to bottom,#5FD65F,#2FC62F 50%,#4CD04C)"></div><div style="left:682px;top:46.5px;width:5.6px;height:4px;background:linear-gradient(to bottom,#5FD65F,#2FC62F 50%,#4CD04C)"></div><div style="left:689px;top:46.5px;width:5.6px;height:4px;background:linear-gradient(to bottom,#5FD65F,#2FC62F 50%,#4CD04C)"></div><div style="left:696px;top:46.5px;width:5.6px;height:4px;background:linear-gradient(to bottom,#5FD65F,#2FC62F 50%,#4CD04C)"></div><div style="left:703px;top:46.5px;width:5.6px;height:4px;background:linear-gradient(to bottom,#5FD65F,#2FC62F 50%,#4CD04C)"></div><div style="left:710px;top:46.5px;width:5.6px;height:4px;background:linear-gradient(to bottom,#5FD65F,#2FC62F 50%,#4CD04C)"></div><div style="left:717px;top:46.5px;width:5.6px;height:4px;background:linear-gradient(to bottom,#5FD65F,#2FC62F 50%,#4CD04C)"></div><div style="left:724px;top:46.5px;width:5.6px;height:4px;background:linear-gradient(to bottom,#5FD65F,#2FC62F 50%,#4CD04C)"></div><div style="left:731px;top:46.5px;width:5.6px;height:4px;background:linear-gradient(to bottom,#5FD65F,#2FC62F 50%,#4CD04C)"></div>
<div style="left:622px;top:68px;width:135px;height:7px;border:1px solid #6C6C74;border-radius:4px;background:#fff"></div><div style="left:626px;top:70.5px;width:5.6px;height:4px;background:linear-gradient(to bottom,#5FD65F,#2FC62F 50%,#4CD04C)"></div><div style="left:633px;top:70.5px;width:5.6px;height:4px;background:linear-gradient(to bottom,#5FD65F,#2FC62F 50%,#4CD04C)"></div><div style="left:640px;top:70.5px;width:5.6px;height:4px;background:linear-gradient(to bottom,#5FD65F,#2FC62F 50%,#4CD04C)"></div><div style="left:647px;top:70.5px;width:5.6px;height:4px;background:linear-gradient(to bottom,#5FD65F,#2FC62F 50%,#4CD04C)"></div><div style="left:654px;top:70.5px;width:5.6px;height:4px;background:linear-gradient(to bottom,#5FD65F,#2FC62F 50%,#4CD04C)"></div><div style="left:661px;top:70.5px;width:5.6px;height:4px;background:linear-gradient(to bottom,#5FD65F,#2FC62F 50%,#4CD04C)"></div><div style="left:668px;top:70.5px;width:5.6px;height:4px;background:linear-gradient(to bottom,#5FD65F,#2FC62F 50%,#4CD04C)"></div><div style="left:675px;top:70.5px;width:5.6px;height:4px;background:linear-gradient(to bottom,#5FD65F,#2FC62F 50%,#4CD04C)"></div><div style="left:682px;top:70.5px;width:5.6px;height:4px;background:linear-gradient(to bottom,#5FD65F,#2FC62F 50%,#4CD04C)"></div><div style="left:689px;top:70.5px;width:5.6px;height:4px;background:linear-gradient(to bottom,#5FD65F,#2FC62F 50%,#4CD04C)"></div><div style="left:696px;top:70.5px;width:5.6px;height:4px;background:linear-gradient(to bottom,#5FD65F,#2FC62F 50%,#4CD04C)"></div><div style="left:703px;top:70.5px;width:5.6px;height:4px;background:linear-gradient(to bottom,#5FD65F,#2FC62F 50%,#4CD04C)"></div><div style="left:710px;top:70.5px;width:5.6px;height:4px;background:linear-gradient(to bottom,#5FD65F,#2FC62F 50%,#4CD04C)"></div><div style="left:717px;top:70.5px;width:5.6px;height:4px;background:linear-gradient(to bottom,#5FD65F,#2FC62F 50%,#4CD04C)"></div><div style="left:724px;top:70.5px;width:5.6px;height:4px;background:linear-gradient(to bottom,#5FD65F,#2FC62F 50%,#4CD04C)"></div><div style="left:731px;top:70.5px;width:5.6px;height:4px;background:linear-gradient(to bottom,#5FD65F,#2FC62F 50%,#4CD04C)"></div><div style="left:738px;top:70.5px;width:5.6px;height:4px;background:linear-gradient(to bottom,#5FD65F,#2FC62F 50%,#4CD04C)"></div><div style="left:745px;top:70.5px;width:5.6px;height:4px;background:linear-gradient(to bottom,#5FD65F,#2FC62F 50%,#4CD04C)"></div><div style="left:752px;top:70.5px;width:5px;height:4px;background:linear-gradient(to bottom,#5FD65F,#2FC62F 50%,#4CD04C)"></div>
<div style="left:622px;top:92px;width:135px;height:7px;border:1px solid #6C6C74;border-radius:4px;background:#fff"></div><div style="left:626px;top:94.5px;width:5.6px;height:4px;background:linear-gradient(to bottom,#5FD65F,#2FC62F 50%,#4CD04C)"></div><div style="left:633px;top:94.5px;width:5.6px;height:4px;background:linear-gradient(to bottom,#5FD65F,#2FC62F 50%,#4CD04C)"></div><div style="left:640px;top:94.5px;width:5.6px;height:4px;background:linear-gradient(to bottom,#5FD65F,#2FC62F 50%,#4CD04C)"></div><div style="left:647px;top:94.5px;width:5.6px;height:4px;background:linear-gradient(to bottom,#5FD65F,#2FC62F 50%,#4CD04C)"></div><div style="left:654px;top:94.5px;width:5.6px;height:4px;background:linear-gradient(to bottom,#5FD65F,#2FC62F 50%,#4CD04C)"></div><div style="left:661px;top:94.5px;width:5.6px;height:4px;background:linear-gradient(to bottom,#5FD65F,#2FC62F 50%,#4CD04C)"></div><div style="left:668px;top:94.5px;width:5.6px;height:4px;background:linear-gradient(to bottom,#5FD65F,#2FC62F 50%,#4CD04C)"></div><div style="left:675px;top:94.5px;width:5.6px;height:4px;background:linear-gradient(to bottom,#5FD65F,#2FC62F 50%,#4CD04C)"></div><div style="left:682px;top:94.5px;width:5.6px;height:4px;background:linear-gradient(to bottom,#5FD65F,#2FC62F 50%,#4CD04C)"></div><div style="left:689px;top:94.5px;width:5.6px;height:4px;background:linear-gradient(to bottom,#5FD65F,#2FC62F 50%,#4CD04C)"></div><div style="left:696px;top:94.5px;width:5.6px;height:4px;background:linear-gradient(to bottom,#5FD65F,#2FC62F 50%,#4CD04C)"></div><div style="left:703px;top:94.5px;width:5.6px;height:4px;background:linear-gradient(to bottom,#5FD65F,#2FC62F 50%,#4CD04C)"></div><div style="left:710px;top:94.5px;width:5.6px;height:4px;background:linear-gradient(to bottom,#5FD65F,#2FC62F 50%,#4CD04C)"></div><div style="left:717px;top:94.5px;width:5.6px;height:4px;background:linear-gradient(to bottom,#5FD65F,#2FC62F 50%,#4CD04C)"></div><div style="left:724px;top:94.5px;width:5.6px;height:4px;background:linear-gradient(to bottom,#5FD65F,#2FC62F 50%,#4CD04C)"></div><div style="left:731px;top:94.5px;width:5.6px;height:4px;background:linear-gradient(to bottom,#5FD65F,#2FC62F 50%,#4CD04C)"></div><div style="left:738px;top:94.5px;width:5.6px;height:4px;background:linear-gradient(to bottom,#5FD65F,#2FC62F 50%,#4CD04C)"></div><div style="left:745px;top:94.5px;width:5.6px;height:4px;background:linear-gradient(to bottom,#5FD65F,#2FC62F 50%,#4CD04C)"></div><div style="left:752px;top:94.5px;width:5px;height:4px;background:linear-gradient(to bottom,#5FD65F,#2FC62F 50%,#4CD04C)"></div>
<div class="grp" style="left:518px;top:127px;width:247px;height:755px"></div>
<div class="lblbg" style="left:524px;top:123px;width:82px;height:10px;"></div>
<div class="grp" style="left:527px;top:139px;width:229px;height:58px"></div>
<div class="lblbg" style="left:533px;top:135px;width:154px;height:10px;"></div>
<div class="grp" style="left:527px;top:208px;width:70px;height:32px"></div>
<div class="lblbg" style="left:533px;top:204px;width:45px;height:10px;"></div>
<div class="grp" style="left:606px;top:208px;width:150px;height:32px"></div>
<div class="lblbg" style="left:612px;top:204px;width:124px;height:10px;"></div>
<div class="grp" style="left:527px;top:251px;width:70px;height:55px"></div>
<div class="lblbg" style="left:533px;top:247px;width:50px;height:10px;"></div>
<div class="grp" style="left:606px;top:251px;width:150px;height:55px"></div>
<div class="lblbg" style="left:612px;top:247px;width:50px;height:10px;"></div>
<div class="grp" style="left:527px;top:317px;width:229px;height:33px"></div>
<div class="lblbg" style="left:533px;top:314px;width:40px;height:10px;"></div>
<svg style="left:531px;top:144px" width="28" height="28" viewBox="0 0 28 28" ><defs><radialGradient id="shg" cx=".5" cy=".45" r=".55"><stop offset="0" stop-color="#E4FAFF"/><stop offset=".55" stop-color="#BDE6F2" stop-opacity=".9"/><stop offset="1" stop-color="#C8ECF4" stop-opacity="0"/></radialGradient>
<radialGradient id="shc" cx=".5" cy=".5" r=".5"><stop offset="0" stop-color="#F4FFFF"/><stop offset=".5" stop-color="#9CE0EC"/><stop offset="1" stop-color="#5C7478"/></radialGradient></defs>
<g filter="url(#bl)"><ellipse cx="13.5" cy="9.5" rx="11" ry="9" fill="url(#shg)"/>
<ellipse cx="14.5" cy="21" rx="12" ry="5.6" fill="#2E3438"/><ellipse cx="14.5" cy="20" rx="10.4" ry="4.2" fill="#6E7A7E"/>
<ellipse cx="14" cy="19.4" rx="6" ry="2.6" fill="url(#shc)"/><path d="M11 8 Q14 3 17 8 L15.6 18 L12.4 18 Z" fill="#D6F8FF" opacity=".7"/></g></svg><svg style="left:607px;top:148px" width="28" height="22" viewBox="0 0 28 22" ><g filter="url(#bl)">
<path d="M2 16 L4 5 Q5 2.6 9 2.6 L20 2 Q25 3 26.4 9 L26.4 12 Q24 7.6 20 7.6 Q17 8 16 11 L14 19 Z" fill="#BCBEC2"/>
<path d="M4.4 5 Q5.4 3.4 9 3.4 L20 2.8 Q23 3.4 24.6 6 Q21 5 18 6 L5 7.6 Z" fill="#E2E4E8"/>
<path d="M7.4 3.2 L6 17 M11.4 3 L10.2 18 M15.6 2.8 L14.6 12" stroke="#86888C" stroke-width=".9"/>
<path d="M16 11 Q17 8 20 7.6 Q24 7.6 26.4 12 L26.4 14.4 L22 13 Q20 11 18.6 13 L17 18.4 L14 19 Z" fill="#2C2E32"/>
<path d="M2 16 L14 19 L15.4 20.8 L3 18.4 Z" fill="#505256"/></g></svg><svg style="left:686px;top:146px" width="22" height="24" viewBox="0 0 22 24" ><g filter="url(#bl)">
<path d="M11 1 L20.6 6 L20.6 17.4 L11 23 L1.4 17.4 L1.4 6 Z" fill="#3E342A"/>
<path d="M11 3.2 L18 7 L11 10.8 L4 7 Z" fill="#E4D8C4"/>
<path d="M3.2 8.6 L9.8 12.4 L9.8 20.4 L3.2 16.4 Z" fill="#D2C6B2"/>
<path d="M12.2 12.4 L18.8 8.6 L18.8 16.4 L12.2 20.4 Z" fill="#A4988A"/>
<path d="M11 3 V11 M3.2 8.6 L9.8 20.4 M18.8 8.6 L12.2 20.4" stroke="#3A3026" stroke-width="1.2"/></g></svg><svg style="left:532px;top:174px" width="17" height="18" viewBox="0 0 17 18" ><defs><radialGradient id="emg" cx=".55" cy=".45" r=".6"><stop offset="0" stop-color="#86DCEC"/><stop offset=".6" stop-color="#3A90B4"/><stop offset="1" stop-color="#2A6A8C"/></radialGradient></defs>
<g filter="url(#bl)"><path d="M1 7 Q3 2 9 1.5 Q15 3 15.5 9 Q14 15 8 16.5 Q3 14 1 7 Z" fill="url(#emg)"/>
<path d="M10 3.4 L5 9.4 L8 9.6 L6 14.6 L12 8 L9 7.8 Z" fill="#F8FFFF"/></g></svg><div style="left:548px;top:173px;width:1px;height:23px;background:linear-gradient(to bottom,#E0E0E6,#8C8C98 50%,#E0E0E6)"></div><div style="left:549px;top:173px;width:1px;height:23px;background:linear-gradient(to bottom,#ECECF0,#C4C8D4 50%,#ECECF0)"></div><svg style="left:587px;top:176px" width="17" height="16" viewBox="0 0 17 16" ><g filter="url(#bl)"><g stroke="#D4341E" stroke-width="2.6" fill="none" stroke-linecap="round"><path d="M2 3.6 Q5 1.6 8 3.8 T14.6 3"/><path d="M1.4 8 Q5 5.8 8 8.2 T14.6 7.4"/><path d="M2 12.4 Q5 10.2 8 12.6 T14.6 11.8"/></g>
<g stroke="#F8A080" stroke-width=".8" fill="none"><path d="M2.4 3 Q5 1.2 8 3.2 T14 2.4"/><path d="M2 7.4 Q5 5.4 8 7.6 T14 6.8"/><path d="M2.4 11.8 Q5 9.8 8 12 T14 11.2"/></g></g></svg><div style="left:604px;top:173px;width:1px;height:23px;background:linear-gradient(to bottom,#E0E0E6,#8C8C98 50%,#E0E0E6)"></div><div style="left:605px;top:173px;width:1px;height:23px;background:linear-gradient(to bottom,#ECECF0,#C4C8D4 50%,#ECECF0)"></div><svg style="left:645px;top:176px" width="16" height="16" viewBox="0 0 16 16" ><g filter="url(#bl)"><path d="M0 6.6 L8 7 L13.6 2.6 L12 7.6 L15 12.4 L9 9.8 L1 10.4 Z" fill="#A6AAB2"/><path d="M6 7.6 L12 5 L11 8 L13 11 L8.5 9 Z" fill="#FAFCFF"/><path d="M0 7.4 L7 8 L7 9.2 L1 9.6 Z" fill="#D0D4DC"/></g></svg><div style="left:661px;top:173px;width:1px;height:23px;background:linear-gradient(to bottom,#E0E0E6,#8C8C98 50%,#E0E0E6)"></div><div style="left:662px;top:173px;width:1px;height:23px;background:linear-gradient(to bottom,#ECECF0,#C4C8D4 50%,#ECECF0)"></div><svg style="left:701px;top:175px" width="16" height="18" viewBox="0 0 16 18" ><defs><radialGradient id="exg" cx=".52" cy=".5" r=".5"><stop offset="0" stop-color="#FFFCEC"/><stop offset=".3" stop-color="#FCC878"/><stop offset=".7" stop-color="#CC5A20"/><stop offset="1" stop-color="#5A2410"/></radialGradient></defs>
<g filter="url(#bl)"><rect x="1" y="1.4" width="14" height="15" rx="2.4" fill="#4E2612"/><circle cx="8.2" cy="9" r="6.6" fill="url(#exg)"/></g></svg><div style="left:717px;top:173px;width:1px;height:23px;background:linear-gradient(to bottom,#E0E0E6,#8C8C98 50%,#E0E0E6)"></div><div style="left:718px;top:173px;width:1px;height:23px;background:linear-gradient(to bottom,#ECECF0,#C4C8D4 50%,#ECECF0)"></div><svg style="left:534px;top:215px" width="22" height="24" viewBox="0 0 22 24" ><defs><linearGradient id="dfg" x1="0" x2="1"><stop offset="0" stop-color="#5E7A6C"/><stop offset=".3" stop-color="#8C9482"/><stop offset=".5" stop-color="#A8523A"/><stop offset=".68" stop-color="#8A6A58"/><stop offset="1" stop-color="#B4B4A8"/></linearGradient>
<radialGradient id="dfgl" cx=".5" cy=".5" r=".5"><stop offset=".5" stop-color="#58D0C4"/><stop offset=".8" stop-color="#7CE0D6" stop-opacity=".8"/><stop offset="1" stop-color="#9CE8E0" stop-opacity="0"/></radialGradient></defs>
<g filter="url(#bl)"><ellipse cx="11" cy="12" rx="10.6" ry="11.6" fill="url(#dfgl)"/>
<path d="M4 3 L18 3 L18 12.6 Q17 18.6 11 21 Q5 18.6 4 12.6 Z" fill="url(#dfg)"/>
<path d="M4 3 L18 3 L18 5 L4 5 Z" fill="#E4F4F0" opacity=".8"/></g></svg><svg style="left:611px;top:215px" width="21" height="22" viewBox="0 0 21 22" ><g filter="url(#bl)">
<path d="M1.6 13 L8.6 1.6 L14 1.4 L19.6 5 L13 19.4 L7 20.6 L2 17.6 Z" fill="#5A4830"/>
<path d="M4.6 13.6 L10.4 3.4 L13.6 3.6 L8.6 15 Z" fill="#F2EAD8"/>
<path d="M9.6 15.6 L14.6 4.6 L17.6 6 L12.4 17.6 Z" fill="#A89068"/>
<path d="M11.6 9.6 L18 8 L17 10.4 L11 12 Z" fill="#EEE4CC"/>
<path d="M2 14 L7 17 L12 16.4 L12.6 19.4 L7 20.6 L2 17.6 Z" fill="#2E2418"/></g></svg><svg style="left:691px;top:215px" width="24" height="22" viewBox="0 0 24 22" ><g filter="url(#bl)">
<path d="M1.6 8 Q4 1.4 11 2 L20 7.4 Q23.6 12 21.6 17.6 L15 21 Q6 19 2 13 Z" fill="#4A4636"/>
<path d="M3 8 Q5 3.4 10 3.4 L16 6.6 Q10 7.4 7 11.6 L3.6 11.4 Z" fill="#C4BA9C"/>
<path d="M2 12 L8 14 L13 20 Q6 18.6 2 13 Z" fill="#2A261C"/>
<ellipse cx="17.4" cy="13.6" rx="4" ry="5.6" transform="rotate(-20 17.4 13.6)" fill="#7C7C70"/>
<ellipse cx="17.8" cy="13.8" rx="2.6" ry="3.8" transform="rotate(-20 17.8 13.8)" fill="#D4DADA"/></g></svg><svg style="left:530px;top:257px" width="28" height="23" viewBox="0 0 28 23" ><g filter="url(#bl)">
<ellipse cx="22" cy="15" rx="5" ry="3" fill="#C8C8D0" opacity=".6"/>
<path d="M0.6 7 L2 4.6 L13 2 L14 6 L3 9.4 Z" fill="#3C4046"/>
<path d="M2.4 5.4 L12.6 3 L13 4.4 L2.8 7 Z" fill="#D4D8DE"/>
<path d="M12 2 L19 0.6 L24.6 2 L26 6 L22 9.6 L16 10.4 L12.6 7 Z" fill="#8E9298"/>
<path d="M14 2.6 L19 1.6 L23 2.6 L18 4.6 Z" fill="#ECEEF2"/>
<path d="M18 6 L23 5 L24 7 L20 9 Z" fill="#2C3036"/>
<path d="M13 9 L19 8 L18 14 L13 15 Z" fill="#3A3E44"/>
<path d="M8.6 16.6 L13 13.6 L19.6 13 L21 16 L17 20.6 L10.6 21.6 Z" fill="#6A6E74"/>
<path d="M10.4 16.6 L13.4 14.6 L19 14.2 L16 17 Z" fill="#E8EAEE"/>
<path d="M10.6 19.4 L17 18.6 L17 20.6 L10.6 21.6 Z" fill="#D0D2D8"/></g></svg><svg style="left:533px;top:283px" width="25" height="19" viewBox="0 0 25 19" ><g filter="url(#bl)">
<path d="M2 3 L10 2.6 L10 5 L2 4.6 Z" fill="#A8ACB4" opacity=".7"/><path d="M9 2.4 L17 2.6 L18.6 3.8 L17 5.2 L9 5.2 Z" fill="#1C1E22"/><path d="M10 2.6 L16.6 2.8" stroke="#C8CCD4" stroke-width=".6"/>
<path d="M6 9 L14 8.6 L14 11.4 L6 11 Z" fill="#A8ACB4" opacity=".7"/><path d="M13 8.4 L22 8.8 L24 10.2 L22 11.8 L13 11.8 Z" fill="#1C1E22"/><path d="M14 8.8 L21.6 9.2" stroke="#C8CCD4" stroke-width=".6"/>
<path d="M0 15 L6 14.6 L6 17 L0 16.6 Z" fill="#A8ACB4" opacity=".7"/><path d="M4 14.4 L12.6 14.6 L14.4 15.8 L12.6 17.2 L4 17.2 Z" fill="#1C1E22"/><path d="M5 14.8 L12.2 15" stroke="#C8CCD4" stroke-width=".6"/></g></svg><svg style="left:610px;top:256px" width="23" height="24" viewBox="0 0 23 24" ><defs><radialGradient id="rgg" cx=".42" cy=".36" r=".68"><stop offset="0" stop-color="#FFFFFF"/><stop offset=".62" stop-color="#E0EEF2"/><stop offset=".86" stop-color="#BCC8CE"/><stop offset="1" stop-color="#98A4AC"/></radialGradient></defs>
<g filter="url(#bl)"><circle cx="11.2" cy="12.4" r="10.6" fill="url(#rgg)"/><path d="M9.6 15.4 L18.6 4.6" stroke="#2C4854" stroke-width="1.9" stroke-linecap="round"/><path d="M3.4 9 A8.6 8.6 0 0 1 10 3.4" stroke="#fff" stroke-width="1.6" fill="none"/></g></svg><svg style="left:611px;top:282px" width="21" height="21" viewBox="0 0 21 21" ><g filter="url(#bl)"><ellipse cx="10" cy="11" rx="8.4" ry="7.6" fill="#B4A080" opacity=".55"/><g fill="#7C6040"><path d="M9 11 L1.6 4.6 L6 2.6 Z"/><path d="M9 11 L9.6 0.6 L13.6 2 Z"/><path d="M9 11 L17 3 L19.6 7 Z"/><path d="M9 11 L19.6 11 L18.6 15.6 Z"/><path d="M9 11 L14.6 19 L10 20 Z"/><path d="M9 11 L6 20 L2.6 18.6 Z"/><path d="M9 11 L0.6 13.6 L1 9.6 Z"/></g>
<g fill="#EADFC8"><path d="M9 11 L3.6 5.6 L6 4.4 Z"/><path d="M9 11 L10.6 2.6 L12.4 3.2 Z"/><path d="M9 11 L16.6 5 L18 7 Z"/><path d="M9 11 L18.4 11.8 L18 13.6 Z"/><path d="M9 11 L13.4 17.6 L11.4 18.2 Z"/></g><circle cx="9" cy="11" r="2" fill="#3E2C1C"/></g></svg><svg style="left:698px;top:256px" width="25" height="25" viewBox="0 0 25 25" ><defs><radialGradient id="mtg" cx=".42" cy=".4" r=".62"><stop offset="0" stop-color="#ECE8DE"/><stop offset=".62" stop-color="#C6C0B2"/><stop offset=".88" stop-color="#8C8272"/><stop offset="1" stop-color="#5C5244"/></radialGradient></defs>
<g filter="url(#bl)"><circle cx="12.6" cy="12.6" r="10" fill="url(#mtg)"/><circle cx="12.4" cy="12.4" r="5" fill="none" stroke="#8A8070" stroke-width=".9"/><path d="M12.4 0.6 V24.4 M0.6 12.4 H24.4" stroke="#7A7062" stroke-width=".9"/></g></svg><svg style="left:701px;top:282px" width="21" height="21" viewBox="0 0 21 21" ><g filter="url(#bl)"><circle cx="10.4" cy="10.6" r="9.2" fill="#F8FAFC" stroke="#8A9298" stroke-width="1.2"/><circle cx="10.4" cy="10.6" r="5.2" fill="none" stroke="#5A6670" stroke-width="1.7"/><circle cx="10.4" cy="10.6" r="2" fill="#4A5660"/><circle cx="9.8" cy="10" r=".8" fill="#D0D8E0"/></g></svg><svg style="left:532px;top:326px" width="22" height="18" viewBox="0 0 22 18" ><g filter="url(#bl)"><path d="M1 4.6 L7 1.4 L15 4.6 L20.6 10 L19 15 L11 15.6 L4 11 Z" fill="#58C8C0"/><path d="M1.6 5 L7 2.4 L12.6 5 L8 9.4 L3.4 8.4 Z" fill="#F4EEE4"/><path d="M11 8.4 L16 8 L19.6 11.4 L17.6 14.4 L12 13.6 Z" fill="#2CB0A8"/><path d="M13 10 L16 9.8 L17.6 11.6 L15 12.6 Z" fill="#C8F8F4"/><path d="M3.4 8.4 L8 9.4 L10.6 14.4 L5 11.6 Z" fill="#B09C8C"/></g></svg><svg style="left:612px;top:321px" width="28" height="27" viewBox="0 0 28 27" ><g filter="url(#bl)"><circle cx="13.4" cy="11" r="6.8" fill="#5688B0" stroke="#34608A" stroke-width="1.6"/><circle cx="13.4" cy="11" r="4.2" fill="#8CBEDE"/><path d="M13.4 0.6 V5" stroke="#3C6C9C" stroke-width="2.2"/><path d="M11 1.6 H16" stroke="#3C6C9C" stroke-width="1.2"/><path d="M13.2 7 V11.4" stroke="#1C3C5C" stroke-width="1.2"/>
<g fill="#4A7CA4"><path d="M6.4 16.6 L9 17.4 L5 25.4 L0.6 25.4 Z"/><path d="M10.4 18 L13 18.2 L11.4 25.4 L7.4 25.4 Z"/><path d="M14.4 18.2 L17 18 L18.6 25.4 L14.4 25.4 Z"/><path d="M18.4 17.4 L21 16.4 L27 25.4 L22 25.4 Z"/></g></g></svg><svg style="left:680px;top:324px" width="21" height="22" viewBox="0 0 21 22" ><g filter="url(#bl)"><path d="M1.6 7 Q3.6 1.6 10 1.6 L16 4 Q20 8 19.6 14 L17 20 L9 20.4 Q3 16 1.6 7 Z" fill="#6C6050"/><path d="M2.4 7 Q4.4 2.6 10 2.6 L14.4 4.4 Q8 6 5.6 12.6 Q3 11 2.4 7 Z" fill="#78E0D4"/><ellipse cx="12.8" cy="12.6" rx="4.8" ry="5.6" fill="#E0D4C0"/><ellipse cx="13.2" cy="13" rx="2.6" ry="3.2" fill="#5E5040"/><path d="M8.6 20.2 L17 20 L18.6 16.6 L10 17.6 Z" fill="#BCA05C"/></g></svg>
<div id="tx">
<span class="t ttl" style="left:26px;top:9.8px;font:bold 13px 'Liberation Sans',sans-serif;color:#fff;letter-spacing:-0.113px;">Setups for Maelstrom Battleship</span>
<span class="t " style="left:17.5px;top:32.2px;color:#2B4EA6;letter-spacing:-0.249px;">Current Setup</span>
<span class="t " style="left:44px;top:49.7px;letter-spacing:-0.514px;">armor mael</span>
<span class="t " style="left:311.5px;top:32.2px;color:#2B4EA6;letter-spacing:-0.225px;">Character</span>
<span class="t " style="left:316.5px;top:49.7px;letter-spacing:-0.105px;">blade</span>
<span class="t " style="left:17.5px;top:87.7px;letter-spacing:-0.180px;">Modules</span>
<span class="t " style="left:376.3px;top:87.7px;letter-spacing:-0.368px;">Optimal</span>
<span class="t " style="left:424.5px;top:87.7px;letter-spacing:-0.346px;">Charges</span>
<span class="t " style="left:52.5px;top:106.7px;letter-spacing:-0.308px;">Gyrostabilizer II</span>
<span class="t " style="left:272px;top:106.7px;">30</span>
<span class="t " style="left:304.6px;top:106.7px;">1</span>
<span class="t " style="left:52.5px;top:123.7px;letter-spacing:-0.308px;">Gyrostabilizer II</span>
<span class="t " style="left:272px;top:123.7px;">30</span>
<span class="t " style="left:304.6px;top:123.7px;">1</span>
<span class="t " style="left:52.5px;top:140.7px;letter-spacing:-0.285px;">Damage Control II</span>
<span class="t " style="left:272px;top:140.7px;">30</span>
<span class="t " style="left:304.6px;top:140.7px;">1</span>
<span class="t " style="left:340.6px;top:140.7px;">0</span>
<span class="t " style="left:52.5px;top:157.7px;letter-spacing:-0.160px;">1600mm Reinforced Rolled Tungsten Plat...</span>
<span class="t " style="left:272px;top:157.7px;">28</span>
<span class="t " style="left:304.6px;top:157.7px;letter-spacing:0.220px;">500</span>
<span class="t " style="left:52.5px;top:174.7px;letter-spacing:-0.160px;">1600mm Reinforced Rolled Tungsten Plat...</span>
<span class="t " style="left:272px;top:174.7px;">28</span>
<span class="t " style="left:304.6px;top:174.7px;letter-spacing:0.220px;">500</span>
<span class="t " style="left:52.5px;top:191.7px;letter-spacing:-0.166px;">Quad LiF Fueled I Booster Rockets</span>
<span class="t " style="left:272px;top:191.7px;">75</span>
<span class="t " style="left:304.6px;top:191.7px;letter-spacing:0.105px;">1250</span>
<span class="t " style="left:340.6px;top:191.7px;letter-spacing:0.230px;">-57.6</span>
<span class="t " style="left:52.5px;top:208.7px;letter-spacing:-0.250px;">Sensor Booster II</span>
<span class="t " style="left:272px;top:208.7px;">10</span>
<span class="t " style="left:304.6px;top:208.7px;">1</span>
<span class="t " style="left:340.6px;top:208.7px;letter-spacing:0.344px;">-0.5</span>
<span class="t " style="left:52.5px;top:225.7px;letter-spacing:-0.250px;">Sensor Booster II</span>
<span class="t " style="left:272px;top:225.7px;">10</span>
<span class="t " style="left:304.6px;top:225.7px;">1</span>
<span class="t " style="left:340.6px;top:225.7px;letter-spacing:0.344px;">-0.5</span>
<span class="t " style="left:424.6px;top:225.7px;letter-spacing:0.019px;">Targeting Range</span>
<span class="t " style="left:52.5px;top:242.7px;letter-spacing:-0.184px;">Tracking Computer II</span>
<span class="t " style="left:272px;top:242.7px;">35</span>
<span class="t " style="left:304.6px;top:242.7px;">1</span>
<span class="t " style="left:340.6px;top:242.7px;letter-spacing:0.344px;">-0.7</span>
<span class="t " style="left:424.6px;top:242.7px;letter-spacing:-0.198px;">Optimal Range</span>
<span class="t " style="left:52.5px;top:259.7px;letter-spacing:-0.184px;">Tracking Computer II</span>
<span class="t " style="left:272px;top:259.7px;">35</span>
<span class="t " style="left:304.6px;top:259.7px;">1</span>
<span class="t " style="left:340.6px;top:259.7px;letter-spacing:0.344px;">-0.7</span>
<span class="t " style="left:424.6px;top:259.7px;letter-spacing:-0.198px;">Optimal Range</span>
<span class="t " style="left:52.5px;top:276.7px;letter-spacing:-0.184px;">Tracking Computer II</span>
<span class="t " style="left:272px;top:276.7px;">35</span>
<span class="t " style="left:304.6px;top:276.7px;">1</span>
<span class="t " style="left:340.6px;top:276.7px;letter-spacing:0.344px;">-0.7</span>
<span class="t " style="left:424.6px;top:276.7px;letter-spacing:-0.198px;">Optimal Range</span>
<span class="t " style="left:52.5px;top:293.7px;letter-spacing:-0.257px;">1400mm Howitzer Artillery II</span>
<span class="t " style="left:272px;top:293.7px;letter-spacing:0.026px;">35.3</span>
<span class="t " style="left:304.6px;top:293.7px;letter-spacing:0.105px;">3289</span>
<span class="t " style="left:376.6px;top:293.7px;letter-spacing:-0.043px;">152+42</span>
<span class="t " style="left:424.6px;top:293.7px;letter-spacing:-0.431px;">Tremor L</span>
<span class="t " style="left:52.5px;top:310.7px;letter-spacing:-0.257px;">1400mm Howitzer Artillery II</span>
<span class="t " style="left:272px;top:310.7px;letter-spacing:0.026px;">35.3</span>
<span class="t " style="left:304.6px;top:310.7px;letter-spacing:0.105px;">3289</span>
<span class="t " style="left:376.6px;top:310.7px;letter-spacing:-0.043px;">152+42</span>
<span class="t " style="left:424.6px;top:310.7px;letter-spacing:-0.431px;">Tremor L</span>
<span class="t " style="left:52.5px;top:327.7px;letter-spacing:-0.257px;">1400mm Howitzer Artillery II</span>
<span class="t " style="left:272px;top:327.7px;letter-spacing:0.026px;">35.3</span>
<span class="t " style="left:304.6px;top:327.7px;letter-spacing:0.105px;">3289</span>
<span class="t " style="left:376.6px;top:327.7px;letter-spacing:-0.043px;">152+42</span>
<span class="t " style="left:424.6px;top:327.7px;letter-spacing:-0.431px;">Tremor L</span>
<span class="t " style="left:52.5px;top:344.7px;letter-spacing:-0.257px;">1400mm Howitzer Artillery II</span>
<span class="t " style="left:272px;top:344.7px;letter-spacing:0.026px;">35.3</span>
<span class="t " style="left:304.6px;top:344.7px;letter-spacing:0.105px;">3289</span>
<span class="t " style="left:376.6px;top:344.7px;letter-spacing:-0.043px;">152+42</span>
<span class="t " style="left:424.6px;top:344.7px;letter-spacing:-0.431px;">Tremor L</span>
<span class="t " style="left:52.5px;top:361.7px;letter-spacing:-0.257px;">1400mm Howitzer Artillery II</span>
<span class="t " style="left:272px;top:361.7px;letter-spacing:0.026px;">35.3</span>
<span class="t " style="left:304.6px;top:361.7px;letter-spacing:0.105px;">3289</span>
<span class="t " style="left:376.6px;top:361.7px;letter-spacing:-0.043px;">152+42</span>
<span class="t " style="left:424.6px;top:361.7px;letter-spacing:-0.431px;">Tremor L</span>
<span class="t " style="left:52.5px;top:378.7px;letter-spacing:-0.257px;">1400mm Howitzer Artillery II</span>
<span class="t " style="left:272px;top:378.7px;letter-spacing:0.026px;">35.3</span>
<span class="t " style="left:304.6px;top:378.7px;letter-spacing:0.105px;">3289</span>
<span class="t " style="left:376.6px;top:378.7px;letter-spacing:-0.043px;">152+42</span>
<span class="t " style="left:424.6px;top:378.7px;letter-spacing:-0.431px;">Tremor L</span>
<span class="t " style="left:52.5px;top:395.7px;letter-spacing:-0.257px;">1400mm Howitzer Artillery II</span>
<span class="t " style="left:272px;top:395.7px;letter-spacing:0.026px;">35.3</span>
<span class="t " style="left:304.6px;top:395.7px;letter-spacing:0.105px;">3289</span>
<span class="t " style="left:376.6px;top:395.7px;letter-spacing:-0.043px;">152+42</span>
<span class="t " style="left:424.6px;top:395.7px;letter-spacing:-0.431px;">Tremor L</span>
<span class="t " style="left:52.5px;top:412.7px;letter-spacing:-0.257px;">1400mm Howitzer Artillery II</span>
<span class="t " style="left:272px;top:412.7px;letter-spacing:0.026px;">35.3</span>
<span class="t " style="left:304.6px;top:412.7px;letter-spacing:0.105px;">3289</span>
<span class="t " style="left:376.6px;top:412.7px;letter-spacing:-0.043px;">152+42</span>
<span class="t " style="left:424.6px;top:412.7px;letter-spacing:-0.431px;">Tremor L</span>
<span class="t " style="left:52.5px;top:429.7px;letter-spacing:-0.272px;">Trimark Armor Pump I</span>
<span class="t " style="left:272px;top:429.7px;">0</span>
<span class="t " style="left:304.6px;top:429.7px;">0</span>
<span class="t " style="left:52.5px;top:446.7px;letter-spacing:-0.272px;">Trimark Armor Pump I</span>
<span class="t " style="left:272px;top:446.7px;">0</span>
<span class="t " style="left:304.6px;top:446.7px;">0</span>
<span class="t " style="left:52.5px;top:463.7px;letter-spacing:-0.260px;">Ancillary Current Router I</span>
<span class="t " style="left:272px;top:463.7px;">0</span>
<span class="t " style="left:304.6px;top:463.7px;">0</span>
<span class="t " style="left:36.5px;top:837.2px;letter-spacing:-0.144px;">Heavy Armor Maintenance Bot I x4</span>
<span class="t " style="left:46px;top:874.7px;color:#EEEEF2;letter-spacing:0.044px;">Active drones: 4 / 5</span>
<span class="t " style="left:225.5px;top:874.7px;letter-spacing:-0.188px;">Gang bonuses</span>
<span class="t " style="left:387.5px;top:874.7px;letter-spacing:-0.077px;">Projected effects</span>
<span class="t " style="left:526.5px;top:32.2px;color:#2B4EA6;letter-spacing:-0.127px;">Ship Resources</span>
<span class="t " style="left:554px;top:47.7px;letter-spacing:0.383px;">: 0</span>
<span class="t " style="left:554px;top:71.7px;letter-spacing:0.383px;">: 3</span>
<span class="t " style="left:554px;top:95.7px;letter-spacing:0.258px;">: 200</span>
<span class="t " style="left:622.5px;top:53.7px;letter-spacing:0.203px;">628 / 800</span>
<span class="t " style="left:622.5px;top:77.7px;letter-spacing:0.095px;">28570 / 28875</span>
<span class="t " style="left:622.5px;top:101.7px;letter-spacing:0.203px;">100 / 100</span>
<span class="t " style="left:526.5px;top:121.2px;color:#2B4EA6;letter-spacing:-0.317px;">Ship Parameters</span>
<span class="t " style="left:534.8px;top:133.2px;color:#2B4EA6;letter-spacing:-0.112px;">Hitpoints (Effective HP: 82,820)</span>
<span class="t " style="left:562px;top:151.7px;letter-spacing:-0.019px;">: 9600</span>
<span class="t " style="left:637px;top:151.7px;letter-spacing:0.049px;">: 26285</span>
<span class="t " style="left:713px;top:151.7px;letter-spacing:0.081px;">: 8750</span>
<span class="t " style="left:555.7px;top:171.7px;letter-spacing:-0.351px;">12.5%</span>
<span class="t " style="left:555.7px;top:183.7px;letter-spacing:-0.016px;">66%</span>
<span class="t " style="left:611.5px;top:171.7px;letter-spacing:-0.016px;">30%</span>
<span class="t " style="left:611.5px;top:183.7px;letter-spacing:-0.351px;">44.8%</span>
<span class="t " style="left:667.5px;top:171.7px;letter-spacing:-0.301px;">47.5%</span>
<span class="t " style="left:667.5px;top:183.7px;letter-spacing:-0.301px;">36.3%</span>
<span class="t " style="left:723.7px;top:171.7px;letter-spacing:-0.301px;">56.3%</span>
<span class="t " style="left:723.7px;top:183.7px;letter-spacing:-0.301px;">23.5%</span>
<span class="t " style="left:534.8px;top:202.7px;color:#2B4EA6;letter-spacing:0.003px;">Defence</span>
<span class="t " style="left:560px;top:213.7px;letter-spacing:0.047px;">: 20</span>
<span class="t " style="left:560px;top:225.7px;letter-spacing:0.047px;">: 20</span>
<span class="t " style="left:614.5px;top:202.7px;color:#2B4EA6;letter-spacing:-0.268px;">Capacitor (Lasts: 1m 52s)</span>
<span class="t " style="left:638px;top:218.7px;letter-spacing:0.081px;">: 5625</span>
<span class="t " style="left:719px;top:213.7px;letter-spacing:-0.088px;">- 60.7</span>
<span class="t " style="left:719px;top:225.7px;letter-spacing:-0.086px;">+15</span>
<span class="t " style="left:534.8px;top:245.7px;color:#2B4EA6;letter-spacing:-0.363px;">Firepower</span>
<span class="t " style="left:559.3px;top:261.7px;letter-spacing:-0.117px;">: 297</span>
<span class="t " style="left:559.3px;top:285.7px;letter-spacing:-0.319px;">: 3291</span>
<span class="t " style="left:615px;top:245.7px;color:#2B4EA6;letter-spacing:0.029px;">Targeting</span>
<span class="t " style="left:637.4px;top:261.7px;letter-spacing:0.033px;">: 189.11 km</span>
<span class="t " style="left:637.4px;top:285.7px;letter-spacing:-0.226px;">: 146.3 mm</span>
<span class="t " style="left:726.6px;top:261.7px;letter-spacing:-0.117px;">: 6</span>
<span class="t " style="left:726.6px;top:285.7px;letter-spacing:-0.453px;">: 21</span>
<span class="t " style="left:534.8px;top:311.7px;color:#2B4EA6;letter-spacing:-0.285px;">Mobility</span>
<span class="t " style="left:557.2px;top:327.7px;letter-spacing:0.006px;">: 838 m/s</span>
<span class="t " style="left:640.2px;top:327.7px;letter-spacing:-0.111px;">: 25.4 s</span>
<span class="t " style="left:701.5px;top:327.7px;letter-spacing:0.132px;">: 3 au/s</span>
<span class="t " style="left:526.5px;top:361.7px;letter-spacing:-0.207px;">Signature: 2875 m2</span>
<span class="t " style="left:647px;top:361.7px;letter-spacing:-0.285px;">Cargohold: 550 m3</span>
<span class="t " style="left:526.5px;top:377.7px;letter-spacing:-0.073px;">Dronebay: 100 / 100 m3</span>
<span class="t " style="left:526.5px;top:393.7px;letter-spacing:-0.112px;">Price: 237,038,147 isk</span>
</div>
</body></html>
